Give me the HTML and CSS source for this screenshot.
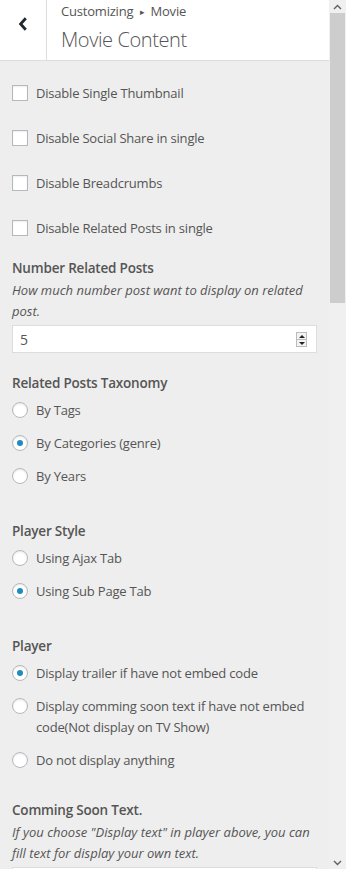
FILE: index.html
```html
<!DOCTYPE html>
<html lang="en">
<head>
    <meta charset="UTF-8">
    <meta name="viewport" content="width=device-width, initial-scale=1.0">
    <title>Movie Content</title>
    <link rel="stylesheet" href="styles.css">
</head>
<body>

    <div class="screen">
        <div class="panel">
            <div class="head">
                <div class="back">
                    <svg width="10" height="14" viewBox="0 0 10 14">
                        <polyline points="7.8,1.2 2.6,7 7.8,12.8" fill="none" stroke="#23282d" stroke-width="2.8"/>
                    </svg>
                </div>
                <div class="title">
                    <div class="crumb">Customizing <span class="sep">&#9656;</span> Movie</div>
                    <h3>Movie Content</h3>
                </div>
            </div>

            <div class="controls">
                <label class="check"><span class="box"></span>Disable Single Thumbnail</label>
                <label class="check"><span class="box"></span>Disable Social Share in single</label>
                <label class="check"><span class="box"></span>Disable Breadcrumbs</label>
                <label class="check last"><span class="box"></span>Disable Related Posts in single</label>

                <div class="field-title">Number Related Posts</div>
                <div class="desc">How much number post want to display on related post.</div>
                <div class="number">
                    <span>5</span>
                    <span class="spin"><i class="up"></i><i class="down"></i></span>
                </div>

                <div class="field-title group">Related Posts Taxonomy</div>
                <label class="radio"><span class="dot"></span>By Tags</label>
                <label class="radio"><span class="dot on"></span>By Categories (genre)</label>
                <label class="radio"><span class="dot"></span>By Years</label>

                <div class="field-title group gap">Player Style</div>
                <label class="radio"><span class="dot"></span>Using Ajax Tab</label>
                <label class="radio"><span class="dot on"></span>Using Sub Page Tab</label>

                <div class="field-title group gap">Player</div>
                <label class="radio"><span class="dot on"></span>Display trailer if have not embed code</label>
                <label class="radio"><span class="dot"></span>Display comming soon text if have not embed code(Not display on TV Show)</label>
                <label class="radio"><span class="dot"></span>Do not display anything</label>

                <div class="field-title soon">Comming Soon Text.</div>
                <div class="desc">If you choose "Display text" in player above, you can fill text for display your own text.</div>
                <div class="textbox"></div>
            </div>
        </div>

        <div class="scrollbar">
            <div class="arrow">
                <svg width="9" height="6" viewBox="0 0 9 6"><polyline points="1,5 4.5,1.5 8,5" fill="none" stroke="#606060" stroke-width="1.4"/></svg>
            </div>
            <div class="thumb"></div>
            <div class="track"></div>
            <div class="arrow">
                <svg width="9" height="6" viewBox="0 0 9 6"><polyline points="1,1 4.5,4.5 8,1" fill="none" stroke="#606060" stroke-width="1.4"/></svg>
            </div>
        </div>
    </div>

</body>
</html>
```

FILE: styles.css
```css
body {
    margin: 0;
    font-family: "Open Sans", "Noto Sans", sans-serif;
    font-size: 13px;
    letter-spacing: -0.2px;
    color: #555;
    overflow: hidden;
}
.screen {
    display: flex;
    height: 869px;
}
.panel {
    width: 329px;
    background-color: #eee;
    overflow: hidden;
}
.head {
    display: flex;
    height: 60px;
    background-color: #fff;
    border-bottom: 1px solid #ddd;
}
.back {
    width: 47px;
    border-right: 1px solid #ddd;
    display: flex;
    justify-content: center;
    padding-top: 17px;
    box-sizing: border-box;
}
.title {
    padding: 1px 0 0 14px;
}
.crumb {
    line-height: 20px;
    font-size: 13px;
}
.sep {
    font-size: 9px;
    margin: 0 3px;
    position: relative;
    top: -1px;
}
.title h3 {
    margin: 3px 0 0;
    font-size: 20px;
    font-weight: 300;
    letter-spacing: -0.4px;
    line-height: 28px;
}
.controls {
    padding: 22px 12px 0;
}
.check {
    display: flex;
    align-items: center;
    gap: 8px;
    height: 20px;
    margin-bottom: 25px;
}
.check.last {
    margin-bottom: 20px;
}
.box {
    width: 16px;
    height: 16px;
    box-sizing: border-box;
    border: 1px solid #b4b9be;
    background-color: #fff;
    box-shadow: inset 0 1px 2px rgba(0, 0, 0, 0.07);
    flex-shrink: 0;
}
.field-title {
    font-size: 13.5px;
    font-weight: 600;
    line-height: 20px;
}
.field-title.group {
    margin-top: 20px;
    margin-bottom: 7px;
}
.field-title.gap {
    margin-top: 34px;
}
.field-title.soon {
    margin-top: 29px;
}
.desc {
    font-style: italic;
    letter-spacing: 0;
    line-height: 21px;
    margin-top: 2px;
}
.number {
    margin-top: 3px;
    height: 28px;
    box-sizing: border-box;
    background-color: #fff;
    border: 1px solid #ddd;
    display: flex;
    align-items: center;
    justify-content: space-between;
    padding: 0 9px 0 7px;
    font-size: 14px;
}
.spin {
    display: flex;
    flex-direction: column;
    width: 11px;
    height: 15px;
    border: 1px solid #bbb;
    box-sizing: border-box;
    background-color: #f3f3f3;
}
.spin i {
    flex: 1;
    position: relative;
}
.spin .up {
    border-bottom: 1px solid #bbb;
}
.spin i::after {
    content: "";
    position: absolute;
    left: 2px;
    top: 2px;
    border-left: 3px solid transparent;
    border-right: 3px solid transparent;
}
.spin .up::after {
    border-bottom: 3px solid #222;
}
.spin .down::after {
    border-top: 3px solid #222;
    top: 2px;
}
.radio {
    display: flex;
    align-items: flex-start;
    gap: 8px;
    line-height: 21px;
    margin-bottom: 12px;
}
.dot {
    width: 16px;
    height: 16px;
    margin-top: 2px;
    box-sizing: border-box;
    border: 1px solid #b4b9be;
    border-radius: 50%;
    background-color: #fff;
    box-shadow: inset 0 1px 2px rgba(0, 0, 0, 0.1);
    flex-shrink: 0;
    display: flex;
    align-items: center;
    justify-content: center;
}
.dot.on::after {
    content: "";
    width: 6px;
    height: 6px;
    border-radius: 50%;
    background-color: #1e8cbe;
}
.textbox {
    margin-top: 3px;
    height: 28px;
    background-color: #fff;
    border: 1px solid #ddd;
}
.scrollbar {
    width: 17px;
    background-color: #f0f0f0;
    display: flex;
    flex-direction: column;
}
.arrow {
    height: 13px;
    display: flex;
    align-items: center;
    justify-content: center;
}
.thumb {
    height: 290px;
    margin: 0 1px;
    background-color: #cdcdcd;
}
.track {
    flex: 1;
}
```
